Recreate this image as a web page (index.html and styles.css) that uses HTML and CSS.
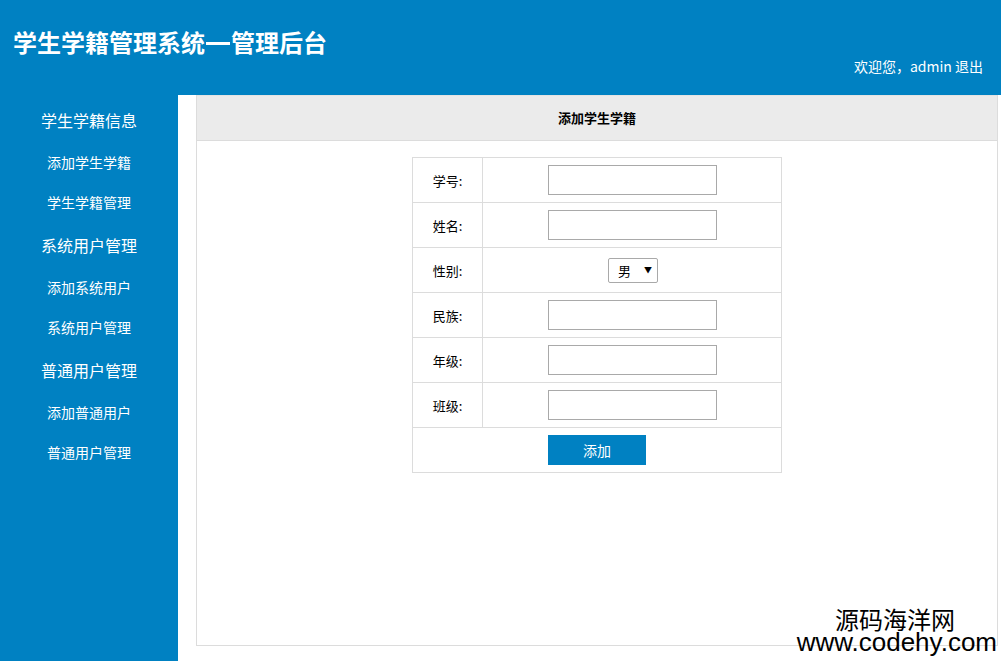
FILE: index.html
```html
<!DOCTYPE html>
<html lang="zh-CN">
<head>
<meta charset="utf-8">
<title>学生学籍管理系统</title>
<link rel="stylesheet" href="styles.css">
</head>
<body>
<div class="header">
  <h1 class="brand">学生学籍管理系统<span class="dash">—</span>管理后台</h1>
  <div class="user">欢迎您，admin 退出</div>
</div>
<div class="layout">
  <div class="sidebar">
    <div class="group">学生学籍信息</div>
    <div class="item">添加学生学籍</div>
    <div class="item">学生学籍管理</div>
    <div class="group">系统用户管理</div>
    <div class="item">添加系统用户</div>
    <div class="item">系统用户管理</div>
    <div class="group">普通用户管理</div>
    <div class="item">添加普通用户</div>
    <div class="item">普通用户管理</div>
  </div>
  <div class="main">
    <div class="panel">
      <div class="panel-head">添加学生学籍</div>
      <table class="form">
        <tr><td class="lbl">学号:</td><td class="fld"><input class="txt" type="text"></td></tr>
        <tr><td class="lbl">姓名:</td><td class="fld"><input class="txt" type="text"></td></tr>
        <tr><td class="lbl">性别:</td><td class="fld"><span class="sel"><span class="sel-val">男</span><span class="sel-arrow">▼</span></span></td></tr>
        <tr><td class="lbl">民族:</td><td class="fld"><input class="txt" type="text"></td></tr>
        <tr><td class="lbl">年级:</td><td class="fld"><input class="txt" type="text"></td></tr>
        <tr><td class="lbl">班级:</td><td class="fld"><input class="txt" type="text"></td></tr>
        <tr><td class="act" colspan="2"><button class="btn" type="button">添加</button></td></tr>
      </table>
    </div>
  </div>
</div>
<div class="watermark">
  <div class="wm-cn">源码海洋网</div>
  <div class="wm-en">www.codehy.com</div>
</div>
</body>
</html>
```
FILE: styles.css
```css
html, body {
  margin: 0;
  padding: 0;
  height: 100%;
  overflow: hidden;
}
body {
  font-family: "Noto Sans CJK SC", "Noto Sans", sans-serif;
  color: #000;
  background: #fff;
  position: relative;
}
.header {
  height: 95px;
  background: #0081c2;
  color: #fff;
  display: flex;
  justify-content: space-between;
  align-items: flex-start;
  box-sizing: border-box;
}
.brand {
  margin: 0;
  padding: 26px 0 0 13px;
  font-size: 24px;
  line-height: 32px;
  font-weight: bold;
  display: flex;
  align-items: center;
}
.dash {
  display: inline-block;
  width: 24px;
  height: 3px;
  background: #fff;
  color: transparent;
  font-size: 1px;
  line-height: 3px;
  overflow: hidden;
  margin: 2px 1px 0;
}
.user {
  padding: 56px 18px 0 0;
  font-size: 14px;
  line-height: 20px;
}
.layout {
  display: flex;
  height: 566px;
}
.sidebar {
  width: 178px;
  flex: none;
  background: #0081c2;
  color: #fff;
  padding-top: 2px;
  box-sizing: border-box;
  text-align: center;
}
.group {
  font-size: 16px;
  line-height: 40px;
  height: 40px;
  margin: 3px 0 2px;
}
.item {
  font-size: 14px;
  line-height: 40px;
  height: 40px;
}
.main {
  flex: 1;
  padding-left: 18px;
  padding-right: 3px;
}
.panel {
  height: 551px;
  border: 1px solid #dcdcdc;
  border-top: none;
  box-sizing: border-box;
}
.panel-head {
  height: 46px;
  background: #ebebeb;
  border-bottom: 1px solid #dcdcdc;
  border-top: 1px solid #e3e3e3;
  box-sizing: border-box;
  text-align: center;
  font-size: 13px;
  font-weight: bold;
  line-height: 44px;
}
.form {
  border-collapse: collapse;
  margin: 16px auto 0;
  width: 370px;
}
.form td {
  border: 1px solid #dcdcdc;
  height: 45px;
  padding: 0;
  box-sizing: border-box;
  font-size: 13px;
}
.lbl {
  width: 70px;
  text-align: center;
}
.fld {
  text-align: center;
}
.act {
  text-align: center;
}
.txt {
  width: 169px;
  height: 30px;
  box-sizing: border-box;
  border: 1px solid #a9a9a9;
  padding: 0 4px;
  margin: 0;
  vertical-align: middle;
  font-size: 13px;
}
.sel {
  display: inline-flex;
  align-items: center;
  position: relative;
  width: 50px;
  height: 25px;
  box-sizing: border-box;
  border: 1px solid #a9a9a9;
  border-radius: 2px;
  vertical-align: middle;
  background: #fff;
  font-size: 13px;
  text-align: left;
  margin-left: 2px;
}
.sel-val {
  padding-left: 9px;
}
.sel-arrow {
  position: absolute;
  right: 5px;
  top: 6px;
  font-size: 8px;
  line-height: 10px;
}
.btn {
  width: 98px;
  height: 30px;
  border: none;
  background: #0081c2;
  color: #fff;
  font-family: "Noto Sans CJK SC", sans-serif;
  font-size: 14px;
  margin: 0;
  padding: 0;
  vertical-align: middle;
}
.watermark {
  position: absolute;
  right: 4px;
  bottom: 7px;
  text-align: right;
  color: #000;
  line-height: 1;
}
.wm-cn {
  font-family: "Noto Sans CJK SC", sans-serif;
  font-size: 24px;
  line-height: 22px;
  margin-right: 42px;
}
.wm-en {
  font-family: "Liberation Sans", sans-serif;
  font-size: 26px;
  line-height: 24px;
}
```
